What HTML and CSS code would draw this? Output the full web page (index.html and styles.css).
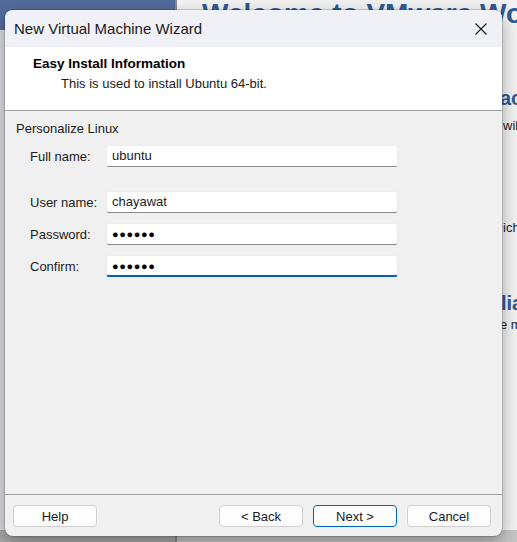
FILE: index.html
```html
<!DOCTYPE html>
<html lang="en">
<head>
    <meta charset="UTF-8">
    <meta name="viewport" content="width=device-width, initial-scale=1.0">
    <title>New Virtual Machine Wizard</title>
    <link rel="stylesheet" href="styles.css">
</head>
<body>

    <!-- Janela principal por tras do assistente -->
    <div class="desktop">
        <div class="sidebar">
            <div class="sidebar-head"></div>
            <div class="sidebar-foot"></div>
        </div>
        <div class="main">
            <h1 class="welcome">Welcome to VMware Workstation</h1>
            <div class="peek">
                <div class="peek-title t1">achine</div>
                <p class="peek-text p1">will</p>
                <p class="peek-text p2">ich</p>
                <div class="peek-title t2">liance</div>
                <p class="peek-text p3">e m</p>
            </div>
            <div class="main-foot"></div>
        </div>
    </div>

    <div class="dialog">
        <div class="titlebar">
            <span class="title">New Virtual Machine Wizard</span>
            <svg class="close" width="12" height="12" viewBox="0 0 12 12">
                <path d="M0.5 0.5 L11.5 11.5 M11.5 0.5 L0.5 11.5" stroke="#1a1a1a" stroke-width="1.1" fill="none"/>
            </svg>
        </div>

        <div class="header">
            <div class="header-title">Easy Install Information</div>
            <div class="header-sub">This is used to install Ubuntu 64-bit.</div>
        </div>

        <div class="content">
            <div class="group-label">Personalize Linux</div>
            <div class="row first">
                <span class="label">Full name:</span>
                <div class="field">ubuntu</div>
            </div>
            <div class="row gap-big">
                <span class="label">User name:</span>
                <div class="field">chayawat</div>
            </div>
            <div class="row">
                <span class="label">Password:</span>
                <div class="field dots">●●●●●●</div>
            </div>
            <div class="row">
                <span class="label">Confirm:</span>
                <div class="field dots focused">●●●●●●</div>
            </div>
        </div>

        <div class="footer">
            <button class="btn">Help</button>
            <div class="spacer"></div>
            <button class="btn">&lt; Back</button>
            <button class="btn primary">Next &gt;</button>
            <button class="btn">Cancel</button>
        </div>
    </div>

</body>
</html>
```

FILE: styles.css
```css
body {
    margin: 0;
    width: 517px;
    height: 542px;
    overflow: hidden;
    font-family: "Liberation Sans", Arial, sans-serif;
    font-size: 13px;
    color: #1b1b1b;
    position: relative;
}

/* Fundo: janela do VMware */
.desktop {
    display: flex;
    height: 542px;
}

.sidebar {
    width: 175px;
    flex-shrink: 0;
    background-color: #dcdee2;
    border-right: 2px solid #8a8a8a;
    display: flex;
    flex-direction: column;
}

.sidebar-head {
    height: 30px;
    background-color: #536c9c;
}

.sidebar-foot {
    margin-top: auto;
    height: 12px;
    background-color: #a9a9a9;
}

.main {
    flex: 1;
    min-width: 0;
    overflow: hidden;
    background-color: #f3f3f3;
    display: flex;
    flex-direction: column;
}

.welcome {
    margin: 0 0 0 25px;
    font-size: 28px;
    line-height: 28px;
    font-weight: bold;
    color: #2d5a98;
    white-space: nowrap;
}

.peek {
    padding-left: 323px;
    white-space: nowrap;
}

.peek-title {
    font-size: 20px;
    line-height: 24px;
    font-weight: bold;
    color: #2d5a98;
}

.peek-text {
    margin: 0;
    font-size: 13px;
    line-height: 16px;
    color: #1b1b1b;
}

.t1 { margin-top: 58px; }
.p1 { margin-top: 8px; padding-left: 3px; }
.p2 { margin-top: 86px; padding-left: 3px; }
.t2 { margin-top: 55px; padding-left: 1px; }
.p3 { margin-top: 2px; }

.main-foot {
    margin-top: auto;
    height: 12px;
    background-color: #c6c6c6;
}

/* Assistente */
.dialog {
    position: absolute;
    left: 5px;
    top: 10px;
    width: 497px;
    height: 526px;
    background-color: #f0f0f0;
    border-radius: 8px;
    box-shadow: 0 0 0 1px rgba(0, 0, 0, 0.15), 0 6px 18px rgba(0, 0, 0, 0.35);
    display: flex;
    flex-direction: column;
    overflow: hidden;
}

.titlebar {
    height: 37px;
    background-color: #eff1f6;
    display: flex;
    align-items: center;
    padding: 0 15px 0 9px;
}

.title {
    font-size: 15px;
    color: #1a1a1a;
}

.close {
    margin-left: auto;
}

.header {
    height: 64px;
    background-color: #ffffff;
    border-bottom: 1px solid #a0a0a0;
    box-sizing: border-box;
    padding: 9px 0 0 28px;
}

.header-title {
    font-weight: bold;
    font-size: 13.5px;
    line-height: 16px;
    color: #000000;
}

.header-sub {
    margin-top: 4px;
    padding-left: 28px;
    line-height: 16px;
    color: #1b1b1b;
}

.content {
    flex: 1;
    padding: 10px 0 0 11px;
}

.group-label {
    line-height: 16px;
}

.row {
    display: flex;
    align-items: center;
    margin-top: 10px;
    padding-left: 14px;
}

.row.first {
    margin-top: 8px;
}

.row.gap-big {
    margin-top: 24px;
}

.label {
    width: 76px;
}

.field {
    width: 292px;
    height: 22px;
    box-sizing: border-box;
    background-color: #ffffff;
    border: 1px solid #ececec;
    border-bottom: 1px solid #8a8a8a;
    border-radius: 3px;
    padding-left: 5px;
    line-height: 20px;
    font-size: 13px;
}

.dots {
    font-size: 11px;
    letter-spacing: 0.6px;
    color: #000000;
}

.field.focused {
    border-bottom: 2px solid #005fb8;
}

.footer {
    height: 42px;
    box-sizing: border-box;
    border-top: 1px solid #a0a0a0;
    display: flex;
    align-items: flex-start;
    gap: 10px;
    padding: 10px 11px 0 8px;
}

.spacer {
    flex: 1;
}

.btn {
    width: 84px;
    height: 22px;
    background-color: #fdfdfd;
    border: 1px solid #d0d0d0;
    border-radius: 4px;
    font-family: "Liberation Sans", Arial, sans-serif;
    font-size: 13px;
    color: #1b1b1b;
    padding: 0;
}

.btn.primary {
    border-color: #0067c0;
}
```
